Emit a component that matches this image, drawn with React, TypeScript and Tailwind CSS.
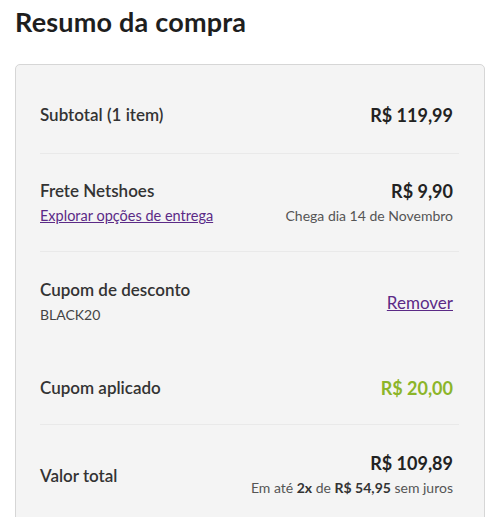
const font = { fontFamily: "Lato, 'Open Sans', sans-serif" };

function Divider() {
  return <div className="mr-[1px] h-px bg-[#e9e9e9]" />;
}

export default function App() {
  return (
    <div className="min-h-[517px] bg-white px-[15px] pt-[5px] text-[#333]" style={font}>
      <h1 className="text-[27px] font-bold leading-[34px] tracking-[0.2px] text-[#1e1e1e]">Resumo da compra</h1>

      <div className="mt-[25px] rounded-[5px] border border-[#d6d6d6] bg-[#f4f4f4] pl-[24px] pr-[24px] pt-[40px] pb-[30px]">
        <div className="flex items-center justify-between pb-[28px] pr-[7px]">
          <span className="text-[17px] font-semibold leading-5 text-[#333]">Subtotal (1 item)</span>
          <span className="text-[18px] font-bold leading-5 text-[#222]">R$ 119,99</span>
        </div>
        <Divider />

        <div className="flex items-start justify-between pt-[27px] pb-[25px] pr-[7px]">
          <div className="flex flex-col gap-[5px]">
            <span className="text-[17px] font-semibold leading-5 text-[#333]">Frete Netshoes</span>
            <a href="#" className="text-[14.5px] leading-5 text-[#5b2a86] underline">
              Explorar opções de entrega
            </a>
          </div>
          <div className="flex flex-col items-end gap-[5px]">
            <span className="text-[18px] font-bold leading-5 text-[#222]">R$ 9,90</span>
            <span className="text-[14px] leading-5 text-[#555]">Chega dia 14 de Novembro</span>
          </div>
        </div>
        <Divider />

        <div className="flex flex-col gap-[53px] pt-[28px] pb-[26px] pr-[7px]">
          <div className="flex items-center justify-between">
            <div className="flex flex-col gap-[5px]">
              <span className="text-[17px] font-semibold leading-5 text-[#333]">Cupom de desconto</span>
              <span className="text-[14px] leading-5 text-[#444]">BLACK20</span>
            </div>
            <a href="#" className="text-[17px] leading-5 text-[#5b2a86] underline">
              Remover
            </a>
          </div>
          <div className="flex items-center justify-between">
            <span className="text-[17px] font-semibold leading-5 text-[#333]">Cupom aplicado</span>
            <span className="text-[18px] font-bold leading-5 text-[#8cb529]">R$ 20,00</span>
          </div>
        </div>
        <Divider />

        <div className="flex items-center justify-between pt-[28px] pr-[7px]">
          <span className="text-[17px] font-semibold leading-5 text-[#333]">Valor total</span>
          <div className="flex flex-col items-end gap-[5px]">
            <span className="text-[18px] font-bold leading-5 text-[#222]">R$ 109,89</span>
            <span className="text-[14px] leading-5 text-[#555]">
              Em até <b className="text-[#333]">2x</b> de <b className="text-[#333]">R$ 54,95</b> sem juros
            </span>
          </div>
        </div>
      </div>
    </div>
  );
}
